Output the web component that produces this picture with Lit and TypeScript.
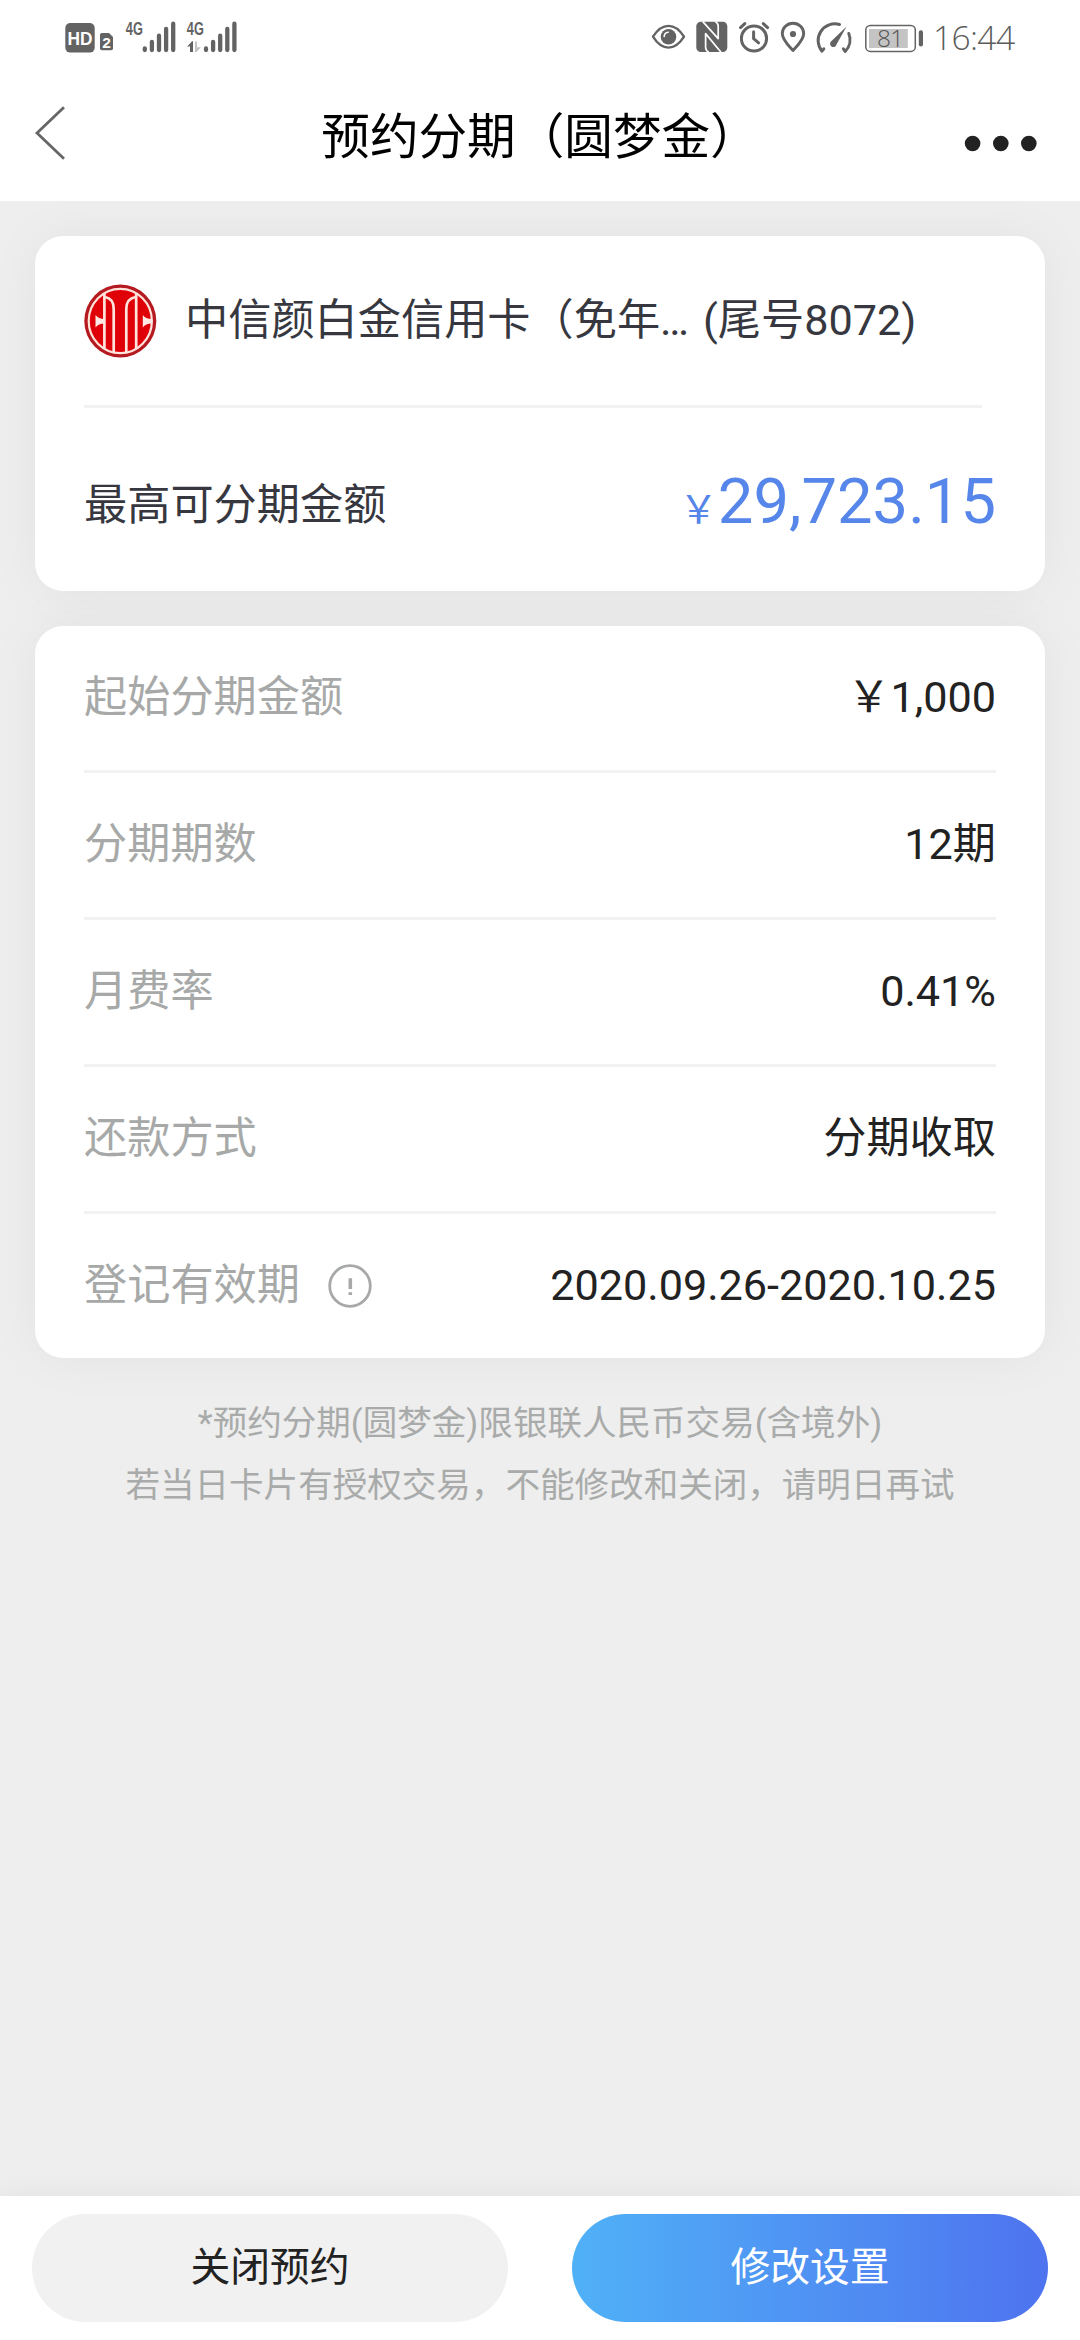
import { LitElement, html, css, nothing } from "lit";
import { customElement, property } from "lit/decorators.js";

interface Detail {
  label: string;
  value: string;
  hint?: boolean;
}

const DETAILS: Detail[] = [
  { label: "起始分期金额", value: "￥1,000" },
  { label: "分期期数", value: "12期" },
  { label: "月费率", value: "0.41%" },
  { label: "还款方式", value: "分期收取" },
  { label: "登记有效期", value: "2020.09.26-2020.10.25", hint: true },
];

@customElement("status-bar")
class StatusBar extends LitElement {
  static styles = css`
    :host {
      display: flex;
      justify-content: space-between;
      height: 72px;
      padding: 0 64px 0 60px;
    }
    svg {
      display: block;
      height: 72px;
    }
    .cond {
      font-family: "Liberation Sans", sans-serif;
      font-weight: 700;
    }
    .thin {
      font-family: "Open Sans", "Noto Sans", sans-serif;
      font-weight: 300;
    }
  `;

  private bars(x: number) {
    const tops = [46.5, 40, 33.7, 27, 21.7];
    return tops.map((t, i) => `M${x + i * 7.1} ${t + 2}V50.1`).join("");
  }

  render() {
    return html`
      <svg width="190" viewBox="60 0 190 72" fill="#636363">
        <rect x="65.3" y="23" width="29.4" height="29.6" rx="5" />
        <text class="cond" x="67.6" y="44.8" font-size="18.5" fill="#fff" textLength="25" lengthAdjust="spacingAndGlyphs">HD</text>
        <path d="M102 33H109L113 37V48.5Q113 50.3 111 50.3H102Q100 50.3 100 48.5V35Q100 33 102 33Z" />
        <text class="cond" x="102.2" y="47.7" font-size="15.5" fill="#fff">2</text>
        <text class="cond" x="125.8" y="35.3" font-size="18.5" textLength="17" lengthAdjust="spacingAndGlyphs">4G</text>
        <path d=${this.bars(144.8)} stroke="#636363" stroke-width="4.3" stroke-linecap="round" />
        <text class="cond" x="186.8" y="35.3" font-size="18.5" textLength="17" lengthAdjust="spacingAndGlyphs">4G</text>
        <path d="M187 46.8L192 41.2H193V52H190V46.3Z" />
        <path d="M195 41.5H197V47.2H201L196.5 52H195Z" fill="#c4c4c4" />
        <path d=${this.bars(206)} stroke="#636363" stroke-width="4.3" stroke-linecap="round" />
      </svg>
      <svg width="366" viewBox="650 0 366 72" fill="none" stroke="#636363">
        <path d="M653 36.7C662 22.2 675 22.2 684 36.7C675 51.2 662 51.2 653 36.7Z" stroke-width="2.4" stroke-linejoin="round" />
        <circle cx="668.5" cy="36.7" r="7.8" fill="#636363" stroke="none" />
        <path d="M664.2 36.5Q664.4 32.6 668.2 32.2" stroke="#fff" stroke-width="1.6" stroke-linecap="round" />
        <rect x="696.3" y="21.8" width="31" height="30.2" rx="4.5" fill="#636363" stroke="none" />
        <path d="M702.8 21.6L718.2 38.6V26Q718 22.8 715.2 21.4M721 52.2L705.6 33.6V47.5Q705.8 50.8 708.8 52.2" stroke="#fff" stroke-width="1.7" stroke-linejoin="round" />
        <circle cx="754" cy="38.5" r="12.6" stroke-width="3" />
        <path d="M753.6 31.8V38.6L758.6 42.8" stroke-width="3" stroke-linecap="round" />
        <path d="M740.5 27.6L744.8 23.6M763.3 23.6L767.6 27.6" stroke-width="3" stroke-linecap="round" />
        <path d="M793 50.5C788.5 45.5 782.3 40 782.3 33.5A10.7 10.3 0 0 1 803.7 33.5C803.7 40 797.5 45.5 793 50.5Z" stroke-width="2.9" stroke-linejoin="round" />
        <circle cx="793" cy="34" r="3.1" fill="#636363" stroke="none" />
        <path d="M839.5 24.5A16.7 16.7 0 0 0 822 51.2L823.8 48.8M848.8 33.5A16.7 16.7 0 0 1 845.2 51.5L843.4 48.8" stroke-width="3" stroke-linecap="round" stroke-linejoin="round" />
        <path d="M846.6 26.6L831 41.4A3.3 3.3 0 1 0 836.6 44.3Z" fill="#636363" stroke="none" />
        <rect x="865.8" y="25.4" width="49.5" height="26" rx="4.5" stroke-width="1.5" />
        <rect x="869" y="29" width="38.8" height="19" fill="#c4c4c4" stroke="none" />
        <rect x="918.8" y="30.3" width="4.2" height="16.2" rx="2" fill="#636363" stroke="none" />
        <text class="thin" x="877" y="46.7" font-size="24.5" fill="#555" stroke="none" textLength="27" lengthAdjust="spacing">81</text>
        <text class="thin" x="933" y="50" font-size="33.5" fill="#5c5c5c" stroke="none" textLength="82" lengthAdjust="spacing">16:44</text>
      </svg>
    `;
  }
}

@customElement("nav-header")
class NavHeader extends LitElement {
  @property() heading = "";

  static styles = css`
    :host {
      display: grid;
      grid-template-columns: 100px 1fr 100px;
      height: 129px;
    }
    .heading {
      font-size: 48.6px;
      line-height: 72px;
      padding-top: 30px;
      text-align: center;
      color: #000;
      white-space: nowrap;
    }
    svg {
      display: block;
    }
  `;

  render() {
    return html`
      <svg width="100" height="129" viewBox="0 72 100 129" fill="none">
        <path d="M64 107.3L37 133L64 158.7" stroke="#666" stroke-width="2.8" />
      </svg>
      <div class="heading">${this.heading}</div>
      <svg width="100" height="129" viewBox="980 72 100 129" fill="#222" overflow="visible">
        <circle cx="972.6" cy="143.5" r="7.8" />
        <circle cx="1000.8" cy="143.5" r="7.8" />
        <circle cx="1028.8" cy="143.5" r="7.8" />
      </svg>
    `;
  }
}

@customElement("detail-row")
class DetailRow extends LitElement {
  @property({ attribute: false }) item!: Detail;

  static styles = css`
    :host {
      display: flex;
      align-items: center;
      justify-content: space-between;
      height: 144px;
      line-height: 64px;
      white-space: nowrap;
    }
    .label {
      display: flex;
      align-items: center;
      gap: 28px;
      color: #a7a9a8;
    }
    .value {
      color: #222;
    }
  `;

  render() {
    return html`
      <div class="label">
        <span>${this.item.label}</span>
        ${this.item.hint
          ? html`<svg width="44" height="44" viewBox="0 0 44 44" fill="none" stroke="#a7a9a8">
              <circle cx="22" cy="22" r="20.3" stroke-width="2.8" />
              <path d="M22.3 14.2V25M22.3 28.3V31" stroke-width="3.6" />
            </svg>`
          : nothing}
      </div>
      <div class="value">${this.item.value}</div>
    `;
  }
}

@customElement("app-root")
class AppRoot extends LitElement {
  static styles = css`
    :host {
      display: flex;
      flex-direction: column;
      height: 2340px;
      width: 1080px;
      overflow: hidden;
      background: #eee;
      font-family: Roboto, "Noto Sans CJK SC", sans-serif;
      font-size: 43.2px;
    }
    .top {
      background: #fff;
      z-index: 1;
    }
    .content {
      flex: 1;
      display: flex;
      flex-direction: column;
      gap: 35px;
      padding: 35px 35px 0;
    }
    .card {
      background: #fff;
      border-radius: 28px;
      box-shadow: 0 0 54px rgba(0, 0, 0, 0.05);
      padding: 0 49px;
    }
    .account {
      display: flex;
      align-items: center;
      height: 169px;
      margin-right: 14px;
      border-bottom: 3px solid #f2f2f2;
      color: #37383f;
      white-space: nowrap;
    }
    .logo {
      flex: none;
      margin-right: 28px;
      margin-top: 1px;
    }
    .name,
    .tail {
      line-height: 60px;
      padding-top: 1px;
    }
    .name {
      margin-right: 14px;
    }
    .amount {
      display: flex;
      align-items: flex-start;
      justify-content: space-between;
      height: 183px;
      color: #37383f;
      white-space: nowrap;
    }
    .caption {
      line-height: 196px;
    }
    .money {
      color: #5686e9;
      font-size: 63.3px;
      line-height: 187px;
    }
    .yen {
      font-size: 38.6px;
    }
    .rows {
      display: flex;
      flex-direction: column;
      height: 732px;
      box-sizing: border-box;
    }
    .rows detail-row + detail-row {
      border-top: 3px solid #f2f2f2;
    }
    .notes {
      margin-top: -1px;
      font-size: 34.56px;
      line-height: 62px;
      text-align: center;
      color: #a9abaa;
      white-space: nowrap;
    }
    .footer {
      display: flex;
      gap: 64px;
      height: 144px;
      box-sizing: border-box;
      padding: 18px 32px;
      background: #fff;
      box-shadow: 0 0 27px rgba(0, 0, 0, 0.06);
    }
    .btn {
      flex: 1;
      border: 0;
      border-radius: 54px;
      font: inherit;
      font-size: 39.8px;
      line-height: 60px;
      padding: 0;
      background: #f1f1f1;
      color: #222;
    }
    .primary {
      background: linear-gradient(90deg, #50b1f7, #4e73ef);
      color: #fff;
    }
  `;

  render() {
    return html`
      <div class="top">
        <status-bar></status-bar>
        <nav-header heading="预约分期（圆梦金）"></nav-header>
      </div>
      <div class="content">
        <section class="card">
          <div class="account">
            <svg class="logo" width="73" height="74" viewBox="0 0 73 74" fill="none">
              <ellipse cx="36.3" cy="37" rx="36" ry="36.5" fill="#b51a20" />
              <ellipse cx="36.3" cy="37" rx="31.6" ry="32.2" fill="#e00008" stroke="#ffe4dc" stroke-width="2.2" />
              <path d="M20.4 10V64.5M52.2 10V64.5" stroke="#ffe4dc" stroke-width="2.7" />
              <path d="M21 13Q29.7 14.5 29.7 25V68.5M51.6 13Q42.3 14.5 42.3 25V68.5" stroke="#ffe4dc" stroke-width="2.7" />
              <path d="M11.5 31Q14.5 35 20.4 35V39.5Q14.5 39.5 11.5 43.5ZM58.8 31Q61.5 35 68 35V39.5Q61.5 39.5 58.8 43.5Z" fill="#ffe9e2" />
            </svg>
            <span class="name">中信颜白金信用卡（免年…</span>
            <span class="tail">(尾号8072)</span>
          </div>
          <div class="amount">
            <span class="caption">最高可分期金额</span>
            <span class="money"><span class="yen">￥</span>29,723.15</span>
          </div>
        </section>
        <section class="card rows">
          ${DETAILS.map((d) => html`<detail-row .item=${d}></detail-row>`)}
        </section>
        <div class="notes">
          <div>*预约分期(圆梦金)限银联人民币交易(含境外)</div>
          <div>若当日卡片有授权交易，不能修改和关闭，请明日再试</div>
        </div>
      </div>
      <div class="footer">
        <button class="btn">关闭预约</button>
        <button class="btn primary">修改设置</button>
      </div>
    `;
  }
}
